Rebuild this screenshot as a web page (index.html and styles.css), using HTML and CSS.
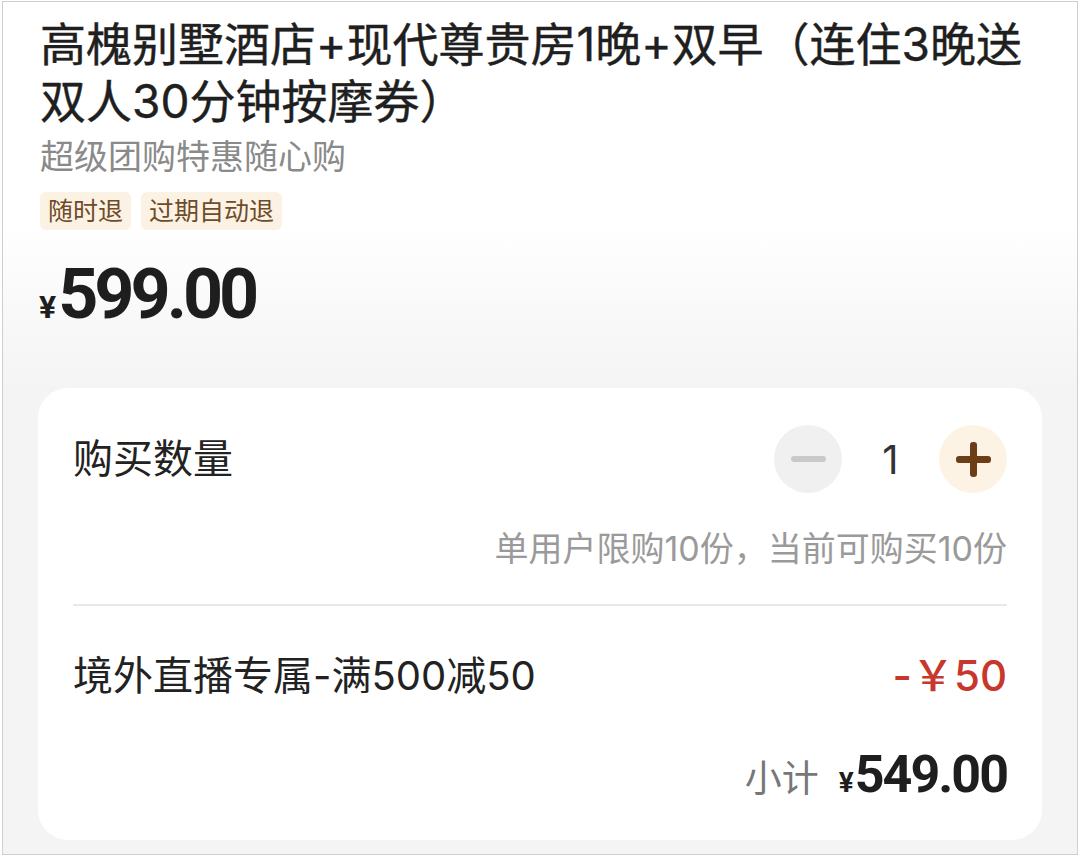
FILE: index.html
```html
<!DOCTYPE html>
<html lang="zh-CN">
<head>
<meta charset="utf-8">
<title>高槐别墅酒店</title>
<link rel="stylesheet" href="styles.css">
</head>
<body>
<div class="frame">
  <h1 class="title">高槐别墅酒店+现代尊贵房1晚+双早（连住3晚送双人30分钟按摩券）</h1>
  <p class="subtitle">超级团购特惠随心购</p>
  <div class="tags">
    <span class="tag">随时退</span>
    <span class="tag">过期自动退</span>
  </div>
  <div class="price"><span class="price-yen">¥</span><span class="price-num">599.00</span></div>

  <section class="card">
    <div class="qty-row">
      <span class="row-label">购买数量</span>
      <div class="stepper">
        <button class="step step-minus" aria-label="减少"><span class="bar-h"></span></button>
        <span class="count">1</span>
        <button class="step step-plus" aria-label="增加"><span class="bar-h"></span><span class="bar-v"></span></button>
      </div>
    </div>
    <p class="limit">单用户限购10份，当前可购买10份</p>
    <div class="divider"></div>
    <div class="discount-row">
      <span class="row-label">境外直播专属-满500减50</span>
      <span class="discount">-￥50</span>
    </div>
    <div class="subtotal-row">
      <span class="subtotal-label">小计</span>
      <span class="subtotal-yen">¥</span><span class="subtotal-num">549.00</span>
    </div>
  </section>
</div>
</body>
</html>
```

FILE: styles.css
```css
* { box-sizing: border-box; }

html, body {
  margin: 0;
  padding: 0;
  background: #ffffff;
}

body {
  font-family: Inter, "Noto Sans CJK SC", sans-serif;
  color: #222222;
}

.frame {
  width: 1076px;
  margin: 1px 0 0 2px;
  border: 1px solid #cfcfcf;
  padding: 14px 0 14px 0;
  background: linear-gradient(to bottom, #ffffff 0, #ffffff 220px, #f4f4f4 386px, #f4f4f4 100%);
}

.title {
  margin: 0 30px 0 37px;
  font-size: 46px;
  line-height: 57px;
  font-weight: 400;
  color: #1f1f1f;
  -webkit-text-stroke: 0.4px #1f1f1f;
}

.subtitle {
  margin: 7px 35px 0 37px;
  font-size: 34px;
  line-height: 40px;
  color: #8a8a8a;
}

.tags {
  display: flex;
  gap: 10px;
  margin: 15px 0 0 37px;
}

.tag {
  display: inline-flex;
  align-items: center;
  height: 38px;
  padding: 0 8px;
  border-radius: 6px;
  background: #fcf2e3;
  color: #6e4b2a;
  font-size: 25px;
  line-height: 38px;
}

.price {
  display: flex;
  align-items: baseline;
  margin: 24px 0 0 36px;
  height: 80px;
  line-height: 80px;
  font-family: Roboto, "Noto Sans", sans-serif;
  font-weight: 700;
  color: #1e1e1e;
}

.price-yen {
  font-size: 32px;
  margin-right: 2px;
}

.price-num {
  font-size: 70px;
  letter-spacing: -4px;
}

.card {
  margin: 54px 35px 0 35px;
  padding: 37px 35px 35px 35px;
  background: #ffffff;
  border-radius: 30px;
}

.qty-row {
  display: flex;
  align-items: center;
  justify-content: space-between;
  height: 68px;
}

.row-label {
  font-size: 40px;
  line-height: 56px;
  color: #222222;
}

.stepper {
  display: flex;
  align-items: center;
}

.step {
  position: relative;
  width: 68px;
  height: 68px;
  border: none;
  border-radius: 50%;
  padding: 0;
  display: flex;
  align-items: center;
  justify-content: center;
}

.step-minus { background: #f0f0f0; }
.step-plus { background: #fdf3e4; }

.bar-h {
  display: block;
  width: 35px;
  height: 6px;
  border-radius: 3px;
}

.step-minus .bar-h { background: #c9c9c9; }

.step-plus .bar-h,
.step-plus .bar-v {
  background: #6b3e17;
}

.step-plus .bar-h { height: 7px; }

.bar-v {
  position: absolute;
  left: 50%;
  top: 50%;
  width: 7px;
  height: 35px;
  margin: -17.5px 0 0 -3.5px;
  border-radius: 3px;
}

.count {
  width: 97px;
  text-align: center;
  font-size: 40px;
  font-weight: 400;
  color: #333333;
}

.limit {
  margin: 36px 0 0 0;
  text-align: right;
  font-size: 34px;
  line-height: 40px;
  color: #9a9a9a;
}

.divider {
  height: 2px;
  margin-top: 35px;
  background: #e8e8e8;
}

.discount-row {
  display: flex;
  justify-content: space-between;
  align-items: center;
  margin-top: 42px;
  height: 56px;
}

.discount {
  font-size: 42px;
  line-height: 56px;
  color: #c8372b;
  font-weight: 500;
}

.subtotal-row {
  display: flex;
  justify-content: flex-end;
  align-items: baseline;
  margin-top: 41px;
  height: 60px;
  line-height: 60px;
}

.subtotal-label {
  font-size: 37px;
  color: #777777;
  margin-right: 20px;
}

.subtotal-yen {
  font-family: Roboto, sans-serif;
  font-weight: 700;
  font-size: 28px;
  color: #1e1e1e;
  margin-right: 1px;
}

.subtotal-num {
  font-family: Roboto, sans-serif;
  font-weight: 700;
  font-size: 52px;
  letter-spacing: -2px;
  color: #1e1e1e;
}
```
